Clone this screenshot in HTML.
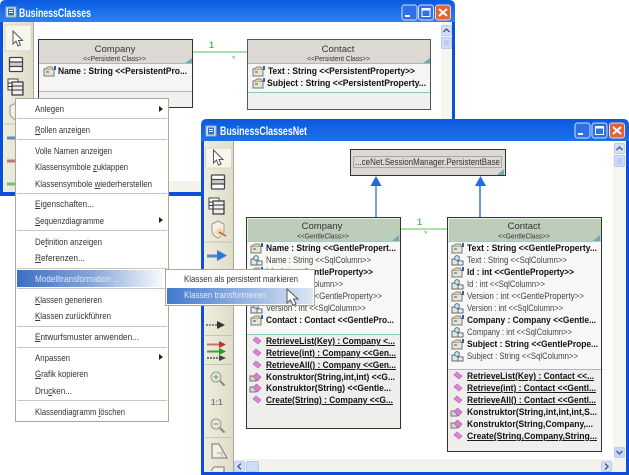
<!DOCTYPE html>
<html><head><meta charset="utf-8"><style>
html,body{margin:0;padding:0;background:#fff;width:629px;height:475px;overflow:hidden}
svg{display:block;filter:blur(.35px)}
text{font-family:"Liberation Sans",sans-serif;fill:#222;white-space:pre}
.m{font-size:9.5px;fill:#333}
.b{font-size:9.5px;font-weight:bold;fill:#111}
.n{font-size:9.5px;fill:#444}
.h{font-size:9.5px;fill:#333}
.s{font-size:7.5px;fill:#333}
.t{font-size:11.5px;font-weight:bold;fill:#fff}
</style></head><body>
<svg width="629" height="475" viewBox="0 0 629 475" xmlns="http://www.w3.org/2000/svg">
<defs>
<linearGradient id="tb" x1="0" y1="0" x2="0" y2="1"><stop offset="0" stop-color="#0a5ae0"/><stop offset=".12" stop-color="#2f86f5"/><stop offset=".3" stop-color="#0f62e6"/><stop offset=".85" stop-color="#0b5fe6"/><stop offset="1" stop-color="#0a46c8"/></linearGradient>
<linearGradient id="hl" x1="0" y1="0" x2="1" y2="0"><stop offset="0" stop-color="#3c6fc4"/><stop offset=".5" stop-color="#86a6da"/><stop offset="1" stop-color="#fff"/></linearGradient>
<linearGradient id="hl2" x1="0" y1="0" x2="1" y2="0"><stop offset="0" stop-color="#4079cc"/><stop offset="1" stop-color="#dde6f4"/></linearGradient>
<linearGradient id="tool" x1="0" y1="0" x2="1" y2="0"><stop offset="0" stop-color="#efedde"/><stop offset="1" stop-color="#dfdcc9"/></linearGradient>
<g id="btn"><rect width="15" height="15" rx="2.5" fill="#2f6fe8" stroke="#cfe0ff"/></g>
<g id="cls"><rect x="0" y="0" width="13" height="14" rx="1" fill="#fff" stroke="#444" stroke-width="1.3"/><rect x="1" y="5" width="11" height="4" fill="#ccc"/><path d="M0 4.5H13M0 9H13" stroke="#444" stroke-width="1.3"/></g>
<g id="mcls"><rect x="0" y="0" width="10" height="11" fill="#fff" stroke="#444"/><rect x="4" y="3" width="11" height="13" fill="#eee" stroke="#333" stroke-width="1.2"/><path d="M4 7H15M4 11H15M0 4H4M0 7.500H4" stroke="#333"/></g>
<g id="shield"><path d="M1 3 L7 0 L13 3 V10 C13 14 9 16 7 17 C5 16 1 14 1 10Z" fill="#f4f1e6" stroke="#999"/></g>
<g id="prop"><rect x="0" y="3" width="10" height="7" fill="#e8e4d4" stroke="#777"/><path d="M1 3 L4 1 H8 L9 3" fill="#e8d890" stroke="#887"/><rect x="2" y="5" width="3" height="2" fill="#99a"/><rect x="10" y="0" width="2" height="4" fill="#2a5fc0"/></g>
<g id="sql"><rect x="0" y="4" width="7" height="6" fill="#e4e6e8" stroke="#667"/><circle cx="5" cy="3" r="2.400" fill="#cfe0e8" stroke="#4a7a90"/><rect x="6" y="6" width="5" height="4" fill="#f2f2f2" stroke="#667"/></g>
<g id="meth"><path d="M0 3 L3 0 L8 4 L5 7Z" fill="#e27fd8" stroke="#b060b0" stroke-width=".6"/></g>
<g id="ctor"><rect x="0" y="3" width="6" height="5" fill="#d8d8d8" stroke="#777"/><path d="M3 3.500 L6.500 0 L11 4 L7.500 8Z" fill="#da7fd0" stroke="#a060a0" stroke-width=".6"/></g>
<g id="ico"><rect width="10" height="10" fill="#d8e4f4" stroke="#9ab"/><rect x="2" y="1.500" width="6" height="7" fill="#3a6ab8"/><path d="M3 3.500H7M3 5.500H7" stroke="#fff"/></g>
<g id="ptr"><path d="M0 0 V13 L3 10 L5 15 L7.500 14 L5.500 9.500 H9.500Z" fill="#fff" stroke="#555"/></g>
</defs>

<!-- Window 1 -->
<path d="M0 196V6Q0 0 6 0H449Q455 0 455 6V196Z" fill="url(#tb)"/>
<rect x="0" y="22" width="455" height="174" fill="#0b50d8"/>
<rect x="3" y="22" width="449" height="170" fill="#fff"/>
<rect x="3" y="22" width="30" height="170" fill="url(#tool)"/>
<rect x="33" y="22" width="1" height="170" fill="#aaa898"/>
<rect x="441" y="22" width="11" height="170" fill="#f6f5f0"/>
<rect x="34" y="181" width="407" height="11" fill="#f3f2ec"/>
<rect x="441.500" y="25.500" width="10" height="10" rx="1.500" fill="#d4e0f8" stroke="#b8ccf0"/>
<path d="M443.500 32L446.500 29L449.500 32" fill="none" stroke="#4d6185" stroke-width="1.500"/>
<rect x="441.500" y="37.500" width="10" height="11" rx="1" fill="#cfdcf8" stroke="#b8ccf0"/>
<path d="M444 41H449M444 43H449M444 45H449" stroke="#aabde6"/>
<g><use href="#ico" x="6" y="7"/></g>
<text class="t" x="19" y="17" textLength="72" lengthAdjust="spacingAndGlyphs">BusinessClasses</text>
<use href="#btn" x="402" y="5"/><path d="M405 16H410" stroke="#fff" stroke-width="2"/>
<use href="#btn" x="418.500" y="5"/><rect x="422" y="8.500" width="8" height="8" fill="none" stroke="#fff"/><path d="M422 9.500H430" stroke="#fff" stroke-width="2"/>
<rect x="435.500" y="5" width="15" height="15" rx="2.500" fill="#e2633a" stroke="#f4d6c8"/><path d="M439 9L447 16M447 9L439 16" stroke="#fff" stroke-width="2"/>
<!-- toolbar 1 -->
<rect x="5" y="25" width="26" height="26" fill="#f7f6ec" stroke="#d8d5c2"/>
<use href="#ptr" x="13" y="31"/>
<use href="#cls" x="9.500" y="57.500"/>
<use href="#mcls" x="8" y="79"/>
<use href="#shield" x="9" y="103"/>
<path d="M4 124H32" stroke="#c8c5b2"/>
<path d="M7 138H24" stroke="#6088c0" stroke-width="3"/>
<path d="M7 161H24" stroke="#b87a70" stroke-width="3"/>
<path d="M7 184H24" stroke="#70c070" stroke-width="3"/>
<!-- Company 1 -->
<rect x="38.500" y="39.500" width="154" height="68" fill="#f0f0ee" stroke="#333"/>
<rect x="39" y="40" width="153" height="23" fill="#dcd9d4"/>
<path d="M39 63.500H192M39 91.500H192" stroke="#8cc6c6"/>
<rect x="39" y="64" width="153" height="27" fill="#f5f5f3"/>
<path d="M192 58V63H185Z" fill="#70aab4"/>
<text class="h" x="115" y="52" text-anchor="middle">Company</text>
<text class="s" x="83" y="61" textLength="63" lengthAdjust="spacingAndGlyphs">&lt;&lt;Persistent Class&gt;&gt;</text>
<use href="#prop" x="44" y="66"/>
<text class="b" x="58" y="74" textLength="129" lengthAdjust="spacingAndGlyphs">Name : String &lt;&lt;PersistentPro...</text>
<!-- Contact 1 -->
<path d="M193 52H247" stroke="#5cc05c"/>
<text x="209" y="48" font-size="9" style="fill:#5cb85c;font-weight:bold">1</text>
<text x="232" y="62" font-size="9" style="fill:#5cb85c">*</text>
<rect x="247.500" y="39.500" width="183" height="70" fill="#f0f0ee" stroke="#555"/>
<rect x="248" y="40" width="182" height="23" fill="#dcd9d4"/>
<path d="M248 63.500H430M248 92.500H430" stroke="#8cc6c6"/>
<rect x="248" y="64" width="182" height="28" fill="#f5f5f3"/>
<path d="M430 58V63H423Z" fill="#70aab4"/>
<text class="h" x="338" y="52" text-anchor="middle">Contact</text>
<text class="s" x="307" y="61" textLength="63" lengthAdjust="spacingAndGlyphs">&lt;&lt;Persistent Class&gt;&gt;</text>
<use href="#prop" x="253" y="66"/><text class="b" x="268" y="74" textLength="147" lengthAdjust="spacingAndGlyphs">Text : String &lt;&lt;PersistentProperty&gt;&gt;</text>
<use href="#prop" x="253" y="78"/><text class="b" x="267" y="86" textLength="159" lengthAdjust="spacingAndGlyphs">Subject : String &lt;&lt;PersistentProperty...</text>

<!-- Window 2 -->
<path d="M201 475V125Q201 119 207 119H623Q629 119 629 125V475Z" fill="url(#tb)"/>
<rect x="201" y="141" width="428" height="334" fill="#0b50d8"/>
<rect x="204" y="141" width="422" height="331" fill="#fff"/>
<rect x="204" y="141" width="29" height="331" fill="url(#tool)"/>
<rect x="233" y="141" width="1" height="331" fill="#aaa898"/>
<rect x="613" y="141" width="13" height="319" fill="#f6f5f0"/>
<rect x="234" y="459" width="392" height="13" fill="#f3f2ec"/>
<rect x="614.500" y="143.500" width="10" height="10" rx="1.500" fill="#d4e0f8" stroke="#b8ccf0"/>
<path d="M616.500 150L619.500 147L622.500 150" fill="none" stroke="#4d6185" stroke-width="1.500"/>
<rect x="614.500" y="155.500" width="10" height="11" rx="1" fill="#cfdcf8" stroke="#b8ccf0"/>
<path d="M617 159H622M617 161H622M617 163H622" stroke="#aabde6"/>
<rect x="614.500" y="447.500" width="10" height="10" rx="1.500" fill="#c6d6f6" stroke="#b8ccf0"/>
<path d="M616.500 451L619.500 454L622.500 451" fill="none" stroke="#4d6185" stroke-width="1.500"/>
<rect x="234.500" y="461.500" width="10" height="10" rx="1.500" fill="#d4e0f8" stroke="#b8ccf0"/>
<path d="M241 463.500L238 466.500L241 469.500" fill="none" stroke="#4d6185" stroke-width="1.500"/>
<rect x="246.500" y="461.500" width="12" height="10" rx="1" fill="#cfdcf8" stroke="#b8ccf0"/>
<rect x="601.500" y="461.500" width="10" height="10" rx="1.500" fill="#d4e0f8" stroke="#b8ccf0"/>
<path d="M605 463.500L608 466.500L605 469.500" fill="none" stroke="#4d6185" stroke-width="1.500"/>
<use href="#ico" x="206" y="126"/>
<text class="t" x="220" y="135" textLength="87" lengthAdjust="spacingAndGlyphs">BusinessClassesNet</text>
<use href="#btn" x="575" y="123"/><path d="M578 134H583" stroke="#fff" stroke-width="2"/>
<use href="#btn" x="592" y="123"/><rect x="595.500" y="126.500" width="8" height="8" fill="none" stroke="#fff"/><path d="M595.500 127.500H603.500" stroke="#fff" stroke-width="2"/>
<rect x="609.500" y="123" width="15" height="15" rx="2.500" fill="#e2633a" stroke="#f4d6c8"/><path d="M613 127L621 134M621 127L613 134" stroke="#fff" stroke-width="2"/>
<!-- toolbar 2 -->
<rect x="205.500" y="148" width="26" height="20" fill="#f7f6ec" stroke="#d8d5c2"/>
<use href="#ptr" x="213.500" y="150"/>
<use href="#cls" x="211.500" y="175"/>
<use href="#mcls" x="209" y="198"/>
<use href="#shield" x="211" y="221"/>
<path d="M221 227L224 234L220 237L214 232Z" fill="#f3d9a0"/><path d="M219 232L226 236" stroke="#c05050" stroke-width="1.500"/>
<path d="M205 242H232" stroke="#c8c5b2"/>
<path d="M207 256H219" stroke="#6088c0" stroke-width="3"/><path d="M217 250L227 255.500L217 261Z" fill="#2f7ad8"/>
<path d="M206 325H217" stroke="#888" stroke-dasharray="2 1" stroke-width="2"/><path d="M217 321L225 325L217 329Z" fill="#333"/>
<path d="M205 335.500H232" stroke="#c8c5b2"/>
<path d="M207 344.500H219" stroke="#b87a70" stroke-width="2"/><path d="M219 341L226 344.500L219 348Z" fill="#c03030"/>
<path d="M207 351.500H219" stroke="#40a040" stroke-width="2"/><path d="M219 348L226 351.500L219 355Z" fill="#20a020"/>
<path d="M207 358H219" stroke="#777" stroke-dasharray="2 1" stroke-width="2"/><path d="M219 355L226 358L219 361Z" fill="#444"/>
<path d="M205 364.500H232" stroke="#c8c5b2"/>
<circle cx="216" cy="377" r="5" fill="#e6e8d4" stroke="#999"/><path d="M213.500 377H218.500M216 374.500V379.500" stroke="#6a9a6a"/><path d="M220 381L224.500 385.500" stroke="#888" stroke-width="2"/>
<text x="211" y="405" font-size="8" style="fill:#777;font-weight:bold">1:1</text>
<circle cx="216" cy="424" r="5" fill="#e6e8d4" stroke="#999"/><path d="M213.500 424H218.500" stroke="#6a9a6a"/><path d="M220 428L224.500 432.500" stroke="#888" stroke-width="2"/>
<path d="M205 437.500H232" stroke="#c8c5b2"/>
<path d="M212 444V458H227L219 444Z" fill="#f2efe4" stroke="#777"/><path d="M217 453H222V457" fill="none" stroke="#aaa"/>
<path d="M211 471L214 467H224V472" fill="#f2efe4" stroke="#777"/>
<!-- base class -->
<rect x="350.500" y="149.500" width="155" height="26" fill="#dcd9d4" stroke="#333"/>
<rect x="353.500" y="156.500" width="148" height="11" fill="none" stroke="#777" stroke-dasharray="1 1"/>
<text class="h" x="355" y="165" textLength="145" lengthAdjust="spacingAndGlyphs">...ceNet.SessionManager.PersistentBase</text>
<path d="M504 169V175H497Z" fill="#70aab4"/>
<path d="M376 186V217" stroke="#7ba3d6" stroke-width="2"/><path d="M376 176L381.500 186H370.500Z" fill="#1f6fd8"/>
<path d="M480 186V217" stroke="#2a72d8" stroke-width="1.500"/><path d="M480.500 176L486 186H475Z" fill="#1f6fd8"/>
<path d="M400 229H447" stroke="#5cc05c"/>
<text x="417" y="225" font-size="9" style="fill:#5cb85c;font-weight:bold">1</text>
<text x="424" y="237" font-size="9" style="fill:#5cb85c">*</text>
<!-- Company 2 -->
<rect x="246.500" y="217.500" width="154" height="211" fill="#eeeeec" stroke="#333"/>
<rect x="248" y="219" width="152" height="22" fill="#bccdb9"/>
<rect x="247" y="241" width="153" height="93" fill="#f7f7f5"/>
<path d="M247 241.500H400" stroke="#a8c8c8"/>
<path d="M247 334.500H400" stroke="#8cc6c6"/>
<path d="M399 235V241H392Z" fill="#70aab4"/>
<text class="h" x="322" y="229" text-anchor="middle">Company</text>
<text class="s" x="297" y="238.500" textLength="52" lengthAdjust="spacingAndGlyphs">&lt;&lt;GentleClass&gt;&gt;</text>
<use href="#prop" x="251" y="243"/><text class="b" x="266" y="251" textLength="130" lengthAdjust="spacingAndGlyphs">Name : String &lt;&lt;GentlePropert...</text>
<use href="#sql" x="251" y="255"/><text class="n" x="266" y="263" textLength="105" lengthAdjust="spacingAndGlyphs">Name : String &lt;&lt;SqlColumn&gt;&gt;</text>
<use href="#prop" x="251" y="267"/><text class="b" x="266" y="275" textLength="107" lengthAdjust="spacingAndGlyphs">Id : int &lt;&lt;GentleProperty&gt;&gt;</text>
<use href="#sql" x="251" y="279"/><text class="n" x="266" y="287" textLength="77" lengthAdjust="spacingAndGlyphs">Id : int &lt;&lt;SqlColumn&gt;&gt;</text>
<use href="#prop" x="251" y="291"/><text class="n" x="266" y="299" textLength="116" lengthAdjust="spacingAndGlyphs">Version : int &lt;&lt;GentleProperty&gt;&gt;</text>
<use href="#sql" x="251" y="303"/><text class="n" x="266" y="311" textLength="100" lengthAdjust="spacingAndGlyphs">Version : int &lt;&lt;SqlColumn&gt;&gt;</text>
<use href="#prop" x="251" y="315"/><text class="b" x="266" y="323" textLength="128" lengthAdjust="spacingAndGlyphs">Contact : Contact &lt;&lt;GentlePro...</text>
<use href="#meth" x="253" y="337"/><text class="b" x="266" y="344" textLength="129" lengthAdjust="spacingAndGlyphs" text-decoration="underline">RetrieveList(Key) : Company &lt;...</text>
<use href="#meth" x="253" y="349"/><text class="b" x="266" y="356" textLength="130" lengthAdjust="spacingAndGlyphs" text-decoration="underline">Retrieve(int) : Company &lt;&lt;Gen...</text>
<use href="#meth" x="253" y="361"/><text class="b" x="266" y="368" textLength="130" lengthAdjust="spacingAndGlyphs" text-decoration="underline">RetrieveAll() : Company &lt;&lt;Gen...</text>
<use href="#ctor" x="250" y="373"/><text class="b" x="266" y="380" textLength="129" lengthAdjust="spacingAndGlyphs">Konstruktor(String,int,int) &lt;&lt;G...</text>
<use href="#ctor" x="250" y="384"/><text class="b" x="266" y="391" textLength="125" lengthAdjust="spacingAndGlyphs">Konstruktor(String) &lt;&lt;Gentle...</text>
<use href="#meth" x="253" y="396"/><text class="b" x="266" y="403" textLength="127" lengthAdjust="spacingAndGlyphs" text-decoration="underline">Create(String) : Company &lt;&lt;G...</text>
<!-- Contact 2 -->
<rect x="447.500" y="217.500" width="154" height="234" fill="#eeeeec" stroke="#333"/>
<rect x="449" y="219" width="152" height="22" fill="#bccdb9"/>
<rect x="448" y="241" width="153" height="128" fill="#f7f7f5"/>
<path d="M448 241.500H601" stroke="#a8c8c8"/>
<path d="M448 369.500H601" stroke="#8cc6c6"/>
<path d="M600 235V241H593Z" fill="#70aab4"/>
<text class="h" x="524" y="229" text-anchor="middle">Contact</text>
<text class="s" x="498" y="238.500" textLength="52" lengthAdjust="spacingAndGlyphs">&lt;&lt;GentleClass&gt;&gt;</text>
<use href="#prop" x="452" y="243"/><text class="b" x="467" y="251" textLength="130" lengthAdjust="spacingAndGlyphs">Text : String &lt;&lt;GentleProperty...</text>
<use href="#sql" x="452" y="255"/><text class="n" x="467" y="263" textLength="100" lengthAdjust="spacingAndGlyphs">Text : String &lt;&lt;SqlColumn&gt;&gt;</text>
<use href="#prop" x="452" y="267"/><text class="b" x="467" y="275" textLength="107" lengthAdjust="spacingAndGlyphs">Id : int &lt;&lt;GentleProperty&gt;&gt;</text>
<use href="#sql" x="452" y="279"/><text class="n" x="467" y="287" textLength="78" lengthAdjust="spacingAndGlyphs">Id : int &lt;&lt;SqlColumn&gt;&gt;</text>
<use href="#prop" x="452" y="291"/><text class="n" x="467" y="299" textLength="117" lengthAdjust="spacingAndGlyphs">Version : int &lt;&lt;GentleProperty&gt;&gt;</text>
<use href="#sql" x="452" y="303"/><text class="n" x="467" y="311" textLength="96" lengthAdjust="spacingAndGlyphs">Version : int &lt;&lt;SqlColumn&gt;&gt;</text>
<use href="#prop" x="452" y="315"/><text class="b" x="467" y="323" textLength="129" lengthAdjust="spacingAndGlyphs">Company : Company &lt;&lt;Gentle...</text>
<use href="#sql" x="452" y="327"/><text class="n" x="467" y="335" textLength="105" lengthAdjust="spacingAndGlyphs">Company : int &lt;&lt;SqlColumn&gt;&gt;</text>
<use href="#prop" x="452" y="339"/><text class="b" x="467" y="347" textLength="131" lengthAdjust="spacingAndGlyphs">Subject : String &lt;&lt;GentlePrope...</text>
<use href="#sql" x="452" y="351"/><text class="n" x="467" y="359" textLength="111" lengthAdjust="spacingAndGlyphs">Subject : String &lt;&lt;SqlColumn&gt;&gt;</text>
<use href="#meth" x="454" y="372"/><text class="b" x="467" y="379" textLength="127" lengthAdjust="spacingAndGlyphs" text-decoration="underline">RetrieveList(Key) : Contact &lt;&lt;...</text>
<use href="#meth" x="454" y="384"/><text class="b" x="467" y="391" textLength="129" lengthAdjust="spacingAndGlyphs" text-decoration="underline">Retrieve(int) : Contact &lt;&lt;Gentl...</text>
<use href="#meth" x="454" y="396"/><text class="b" x="467" y="403" textLength="129" lengthAdjust="spacingAndGlyphs" text-decoration="underline">RetrieveAll() : Contact &lt;&lt;Gentl...</text>
<use href="#ctor" x="451" y="408"/><text class="b" x="467" y="415" textLength="130" lengthAdjust="spacingAndGlyphs">Konstruktor(String,int,int,int,S...</text>
<use href="#ctor" x="451" y="420"/><text class="b" x="467" y="427" textLength="126" lengthAdjust="spacingAndGlyphs">Konstruktor(String,Company,...</text>
<use href="#meth" x="454" y="432"/><text class="b" x="467" y="439" textLength="130" lengthAdjust="spacingAndGlyphs" text-decoration="underline">Create(String,Company,String...</text>

<!-- Context menu -->
<rect x="15.500" y="98.500" width="153" height="323" fill="#fff" stroke="#aaa89a"/>
<path d="M17 118.500H167M17 139.500H167M17 193.500H167M17 230.500H167M17 268.500H167M17 288.500H167M17 326.500H167M17 347.500H167M17 400.500H167" stroke="#c9c7ba"/>
<rect x="17" y="270" width="150" height="17" fill="url(#hl)"/>
<text class="m" x="35" y="112" textLength="29" lengthAdjust="spacingAndGlyphs">Anlegen</text>
<path d="M159 106V112L163 109Z" fill="#222"/>
<text class="m" x="35" y="133" textLength="55" lengthAdjust="spacingAndGlyphs"><tspan text-decoration="underline">R</tspan>ollen anzeigen</text>
<text class="m" x="35" y="154" textLength="77" lengthAdjust="spacingAndGlyphs">Volle Namen anzeigen</text>
<text class="m" x="35" y="170" textLength="93" lengthAdjust="spacingAndGlyphs">Klassensymbole <tspan text-decoration="underline">z</tspan>uklappen</text>
<text class="m" x="35" y="187" textLength="117" lengthAdjust="spacingAndGlyphs">Klassensymbole <tspan text-decoration="underline">w</tspan>iederherstellen</text>
<text class="m" x="35" y="207" textLength="59" lengthAdjust="spacingAndGlyphs"><tspan text-decoration="underline">E</tspan>igenschaften...</text>
<text class="m" x="35" y="224" textLength="69" lengthAdjust="spacingAndGlyphs"><tspan text-decoration="underline">S</tspan>equenzdiagramme</text>
<path d="M159 217V223L163 220Z" fill="#222"/>
<text class="m" x="35" y="245" textLength="67" lengthAdjust="spacingAndGlyphs">De<tspan text-decoration="underline">f</tspan>inition anzeigen</text>
<text class="m" x="35" y="261" textLength="50" lengthAdjust="spacingAndGlyphs"><tspan text-decoration="underline">R</tspan>eferenzen...</text>
<text class="m" x="35" y="282" textLength="85" lengthAdjust="spacingAndGlyphs" style="fill:#dfe8f6">Modelltransformation ...</text>
<text class="m" x="35" y="303" textLength="67" lengthAdjust="spacingAndGlyphs"><tspan text-decoration="underline">K</tspan>lassen generieren</text>
<text class="m" x="35" y="319" textLength="76" lengthAdjust="spacingAndGlyphs"><tspan text-decoration="underline">K</tspan>lassen zurückführen</text>
<text class="m" x="35" y="340" textLength="104" lengthAdjust="spacingAndGlyphs"><tspan text-decoration="underline">E</tspan>ntwurfsmuster anwenden...</text>
<text class="m" x="35" y="361" textLength="35" lengthAdjust="spacingAndGlyphs">Anpassen</text>
<path d="M159 354V360L163 357Z" fill="#222"/>
<text class="m" x="35" y="377" textLength="53" lengthAdjust="spacingAndGlyphs"><tspan text-decoration="underline">G</tspan>rafik kopieren</text>
<text class="m" x="35" y="394" textLength="37" lengthAdjust="spacingAndGlyphs">Dru<tspan text-decoration="underline">c</tspan>ken...</text>
<text class="m" x="35" y="415" textLength="90" lengthAdjust="spacingAndGlyphs">Klassendiagramm <tspan text-decoration="underline">l</tspan>öschen</text>

<!-- Submenu -->
<rect x="165.500" y="269.500" width="149" height="36" fill="#fff" stroke="#aaa89a"/>
<rect x="167" y="288" width="146" height="16" fill="url(#hl2)"/>
<text class="m" x="184" y="282" textLength="114" lengthAdjust="spacingAndGlyphs">Klassen als persistent markieren</text>
<text class="m" x="184" y="298" textLength="82" lengthAdjust="spacingAndGlyphs" style="fill:#e4ecf8">Klassen transformieren</text>
<g transform="translate(287,289)"><path d="M0 0 V14 L3.500 11 L6 16.500 L9 15 L6.500 10 H11Z" fill="#fff" stroke="#555"/></g>
</svg>
</body></html>
